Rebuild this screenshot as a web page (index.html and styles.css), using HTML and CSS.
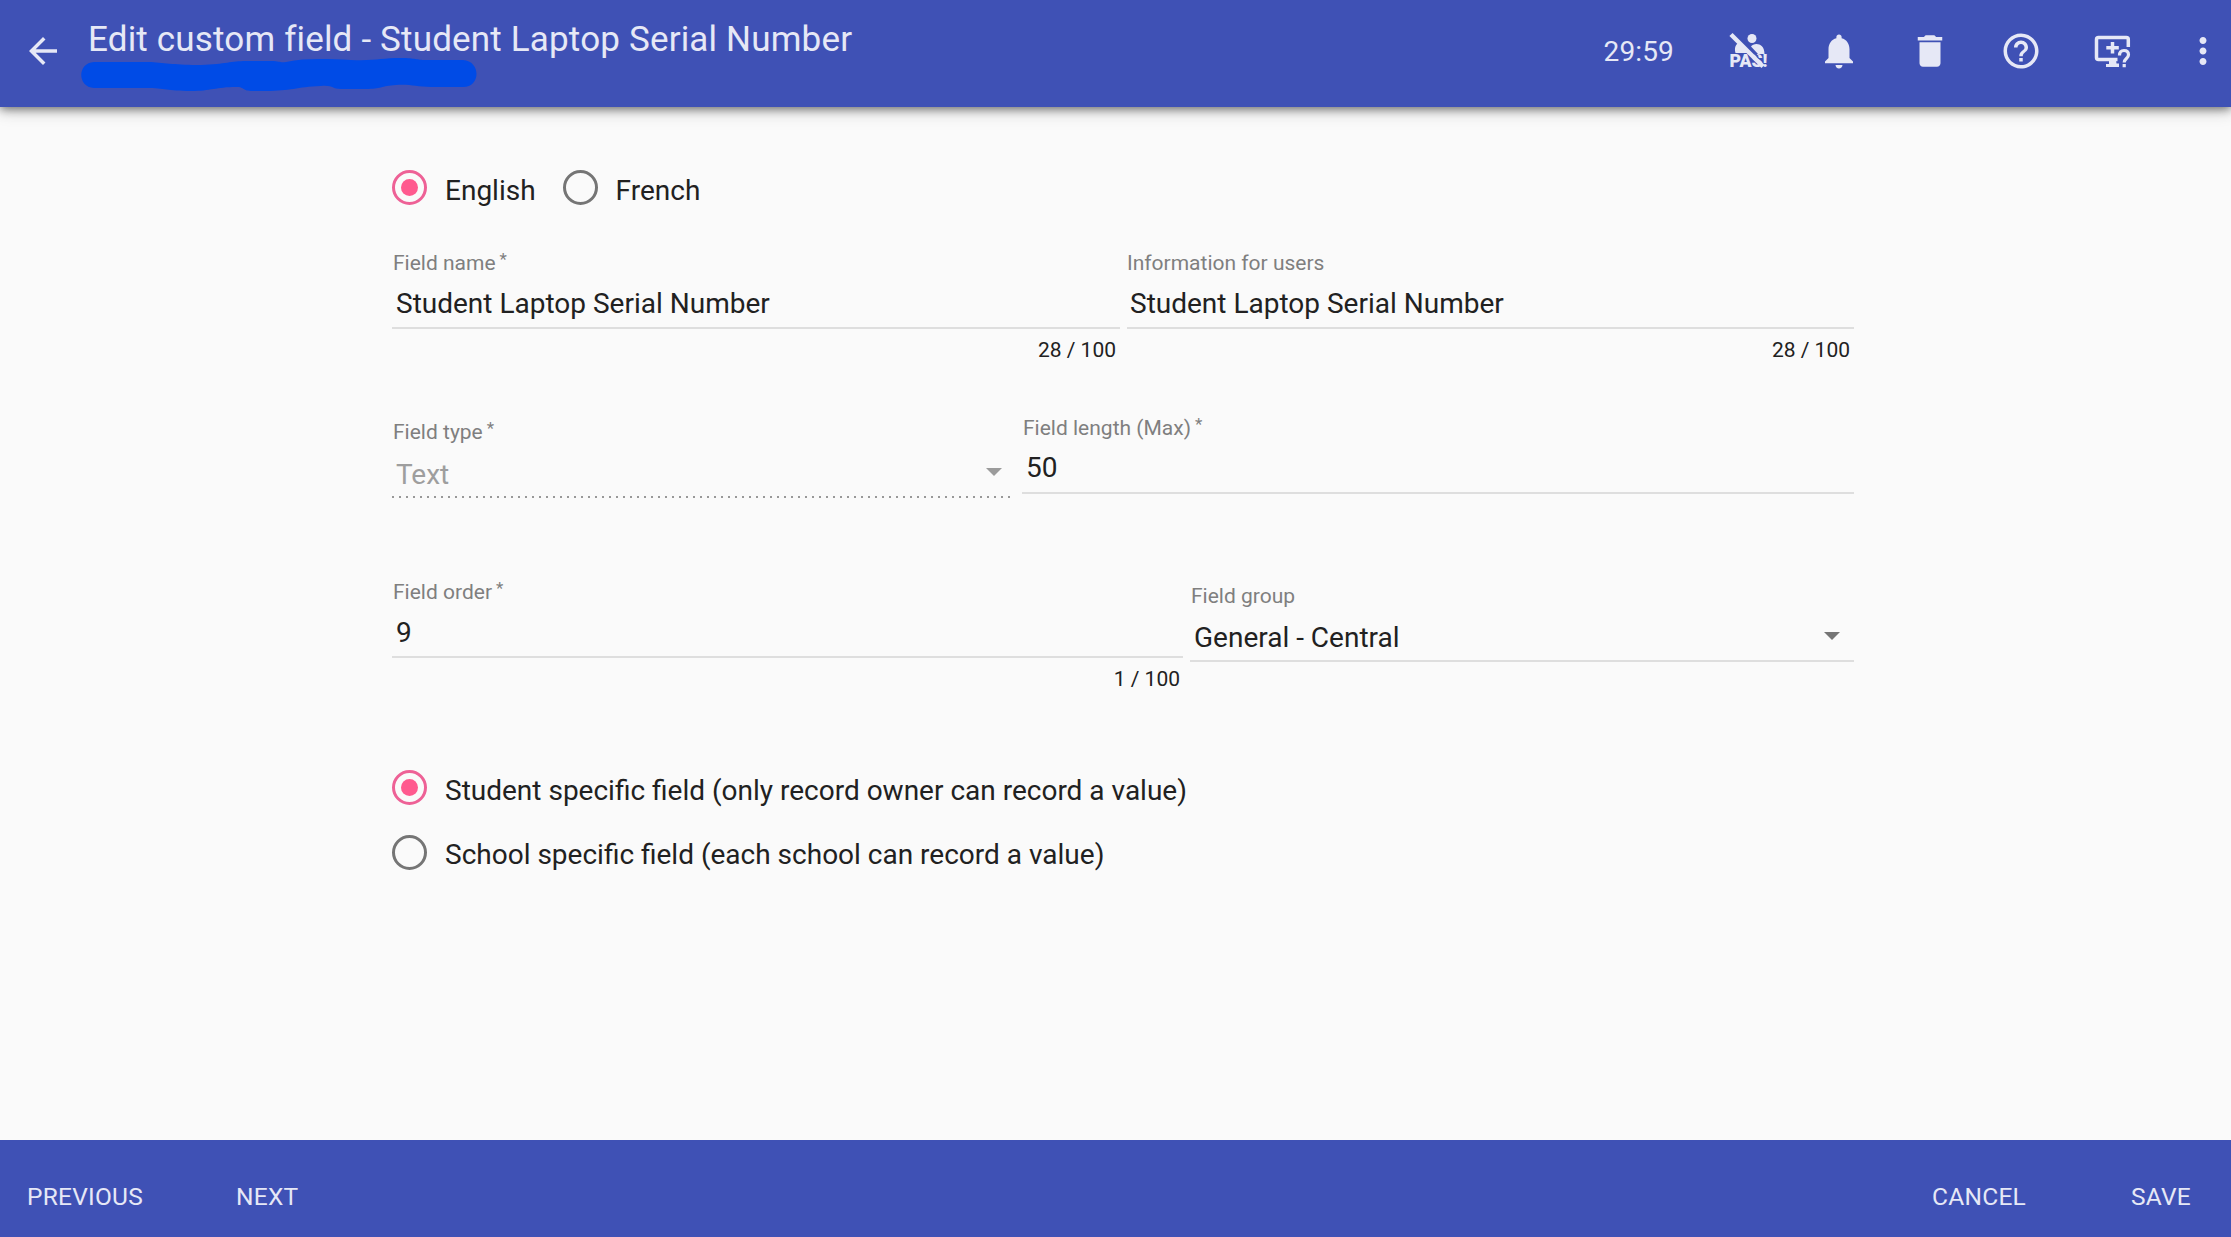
FILE: index.html
```html
<!DOCTYPE html>
<html lang="en">
<head>
<meta charset="utf-8">
<title>Edit custom field</title>
<link rel="stylesheet" href="styles.css">
</head>
<body>
<header class="toolbar">
  <svg class="icon" viewBox="0 0 24 24"><path d="M20 11H7.83l5.59-5.59L12 4l-8 8 8 8 1.41-1.41L7.83 13H20v-2z"/></svg>
  <div class="heading">
    <h1 class="title">Edit custom field - Student Laptop Serial Number</h1>
    <svg class="marker" viewBox="0 0 396 34"><path d="M13 4H70C85 5 95 7 120 7C145 6 150 3 165 3H190C200 3 198 5 205 4C225 0 245 1 270 2C295 3 300 0 320 0C335 0 335 2 345 2H382C400 3 400 29 382 29H350C335 29 330 26 315 27C300 28 300 31 285 31H260C250 31 253 27 240 28C215 29 210 33 185 33H172C160 33 165 29 155 29C135 29 130 33 110 33C85 33 85 30 65 30H13C-4 29-4 5 13 4Z"/></svg>
  </div>
  <div class="tools">
    <span class="timer">29:59</span>
    <svg class="icon" viewBox="0 0 42 42">
      <circle cx="25" cy="8.500" r="4.500"/>
      <path d="M24 16.500C26.500 12.500 37.500 12 37.500 24H31ZM8.500 23C7 18 8.500 13.500 13 12.500L23 23Z"/>
      <text class="pas" x="2.500" y="37" textLength="38" lengthAdjust="spacingAndGlyphs">PAS!</text>
      <path class="gap" d="M7.800 3.500L31 26.700"/>
      <path class="slash" d="M4 4.500L36 36.500"/>
    </svg>
    <svg class="icon" viewBox="0 0 24 24"><path d="M12 22c1.100 0 2-.9 2-2h-4c0 1.100.89 2 2 2zm6-6v-5c0-3.070-1.640-5.640-4.500-6.320V4c0-.83-.67-1.500-1.500-1.500s-1.500.67-1.500 1.500v.68C7.630 5.360 6 7.920 6 11v5l-2 2v1h16v-1l-2-2z"/></svg>
    <svg class="icon" viewBox="0 0 24 24"><path d="M6 19c0 1.100.9 2 2 2h8c1.100 0 2-.9 2-2V7H6v12zM19 4h-3.500l-1-1h-5l-1 1H5v2h14V4z"/></svg>
    <svg class="icon" viewBox="0 0 24 24"><path d="M11 18h2v-2h-2v2zm1-16C6.480 2 2 6.480 2 12s4.480 10 10 10 10-4.480 10-10S17.520 2 12 2zm0 18c-4.410 0-8-3.590-8-8s3.590-8 8-8 8 3.590 8 8-3.590 8-8 8zm0-14c-2.210 0-4 1.790-4 4h2c0-1.100.9-2 2-2s2 .9 2 2c0 2-3 1.750-3 5h2c0-2.250 3-2.500 3-5 0-2.210-1.790-4-4-4z"/></svg>
    <svg class="icon" viewBox="0 0 42 42">
      <path class="line" d="M37.300 17V9.500Q37.300 7.500 35.300 7.500H7.500Q5.500 7.500 5.500 9.500V27.500Q5.500 29.500 7.500 29.500H26.500M21.500 12V23.500M15.300 17.800H27.800"/>
      <path d="M18 30H25L25.500 33.500H28V37H15V34H18Z"/>
      <path class="mark" d="M28.500 25.500Q28.500 20.500 33 20.500Q37.500 20.500 37.500 24.800C37.500 28.500 33.200 28.500 33.200 32.500M33.200 34V37.200"/>
    </svg>
    <svg class="icon" viewBox="0 0 24 24"><path d="M12 8c1.100 0 2-.9 2-2s-.9-2-2-2-2 .9-2 2 .9 2 2 2zm0 2c-1.100 0-2 .9-2 2s.9 2 2 2 2-.9 2-2-.9-2-2-2zm0 6c-1.100 0-2 .9-2 2s.9 2 2 2 2-.9 2-2-.9-2-2-2z"/></svg>
  </div>
</header>

<main class="form">
  <div class="languages">
    <div class="choice"><span class="radio selected"></span><span class="choice-text">English</span></div>
    <div class="choice"><span class="radio"></span><span class="choice-text">French</span></div>
  </div>

  <div class="row names">
    <div class="field">
      <label class="label">Field name<span class="star">*</span></label>
      <div class="value">Student Laptop Serial Number</div>
      <div class="counter">28 / 100</div>
    </div>
    <div class="field info">
      <label class="label">Information for users</label>
      <div class="value">Student Laptop Serial Number</div>
      <div class="counter">28 / 100</div>
    </div>
  </div>

  <div class="row types">
    <div class="field select disabled">
      <label class="label">Field type<span class="star">*</span></label>
      <div class="value">Text<span class="caret"></span></div>
      <div class="dots"></div>
    </div>
    <div class="field">
      <label class="label">Field length (Max)<span class="star">*</span></label>
      <div class="value length">50</div>
    </div>
  </div>

  <div class="row orders">
    <div class="field">
      <label class="label">Field order<span class="star">*</span></label>
      <div class="value">9</div>
      <div class="counter">1 / 100</div>
    </div>
    <div class="field select">
      <label class="label">Field group</label>
      <div class="value">General - Central<span class="caret"></span></div>
    </div>
  </div>

  <div class="scopes">
    <div class="choice"><span class="radio selected"></span><span class="choice-text">Student specific field (only record owner can record a value)</span></div>
    <div class="choice"><span class="radio"></span><span class="choice-text">School specific field (each school can record a value)</span></div>
  </div>
</main>

<footer class="actions">
  <span class="action">Previous</span>
  <span class="action next">Next</span>
  <span class="action cancel">Cancel</span>
  <span class="action">Save</span>
</footer>
</body>
</html>
```

FILE: styles.css
```css
* { box-sizing: border-box; }

body {
  margin: 0;
  height: 1237px;
  display: flex;
  flex-direction: column;
  overflow: hidden;
  background: #fafafa;
  color: #212121;
  font: 28px/1.2 Roboto, sans-serif;
}

.toolbar {
  height: 107px;
  flex: none;
  display: flex;
  padding-left: 22px;
  background: #3f51b5;
  color: #e6e8f6;
  box-shadow: 0 2px 9px rgba(0, 0, 0, .5), 0 4px 16px rgba(0, 0, 0, .16);
}

.icon {
  width: 42px;
  height: 42px;
  flex: none;
  fill: #e6e8f6;
}

.toolbar > .icon { margin-top: 30px; }

.heading {
  display: flex;
  flex-direction: column;
  padding: 20px 0 0 17px;
}

.title {
  margin: 0 0 -1px 7px;
  font-size: 35px;
  font-weight: 400;
  line-height: 39px;
  letter-spacing: .005em;
  white-space: nowrap;
}

.marker {
  width: 396px;
  height: 34px;
  fill: #004be6;
}

.tools {
  display: flex;
  align-items: center;
  height: 42px;
  margin: 30px 7px 0 auto;
  gap: 49px;
}

.timer { margin-right: 4px; padding-top: 1px; letter-spacing: .005em; }

.pas { font: 900 17.5px Roboto, sans-serif; }
.gap { stroke: #3f51b5; stroke-width: 2; fill: none; }
.slash { stroke: #e6e8f6; stroke-width: 4.5; fill: none; }
.line { stroke: #e6e8f6; stroke-width: 3.5px; fill: none; }
.mark { stroke: #e6e8f6; stroke-width: 3.2px; fill: none; }

.form {
  flex: 1;
  width: 1461px;
  margin-left: 392px;
  padding-top: 63px;
}

.languages { display: flex; height: 79px; gap: 27px; }

.choice { display: flex; height: 35px; gap: 18px; }
.choice-text { line-height: 41px; white-space: nowrap; }

.radio {
  width: 35px;
  height: 35px;
  flex: none;
  display: grid;
  place-items: center;
  border: 3px solid #757575;
  border-radius: 50%;
}

.radio.selected { border-color: #ee6196; }

.radio.selected::after {
  content: "";
  width: 17px;
  height: 17px;
  border-radius: 50%;
  background: #ff5a8f;
}

.row { display: grid; align-items: start; }
.names { height: 165px; grid-template-columns: 728px 727px; gap: 7px; }
.types { height: 164px; grid-template-columns: 618px 832px; gap: 12px; }
.orders { height: 192px; grid-template-columns: 791px 664px; gap: 7px; }

.field { display: flex; flex-direction: column; }

.label {
  height: 28px;
  padding-left: 1px;
  color: #7f7f7f;
  font-size: 21px;
  line-height: 28px;
}

.star {
  margin-left: 4px;
  font-size: 17px;
  line-height: 1;
  vertical-align: 5px;
}

.value {
  height: 49px;
  margin-top: 3px;
  padding-left: 4px;
  display: flex;
  align-items: center;
  justify-content: space-between;
  border-bottom: 2px solid #dedede;
}

.value.length { padding-bottom: 1px; }
.info .label { padding-left: 0; }
.info .value { padding-left: 3px; }

.counter {
  margin-top: 9px;
  padding-right: 4px;
  font-size: 21px;
  line-height: 24px;
  text-align: right;
}

.orders .counter { padding-right: 3px; }

.select { margin-top: 4px; }
.select .value { height: 46px; margin-top: 6px; padding-right: 14px; }

.caret {
  margin-top: -4px;
  border: 8px solid transparent;
  border-top-color: #757575;
  border-bottom: 0;
}

.select.disabled .value {
  height: 44px;
  padding: 1px 8px 0 4px;
  border: 0;
  color: #9e9e9e;
}

.disabled .caret { margin-top: -6px; border-top-color: #9b9b9b; }

.dots {
  height: 2px;
  background: repeating-linear-gradient(90deg, #989898 0 2px, transparent 2px 7px);
}

.scopes { display: flex; flex-direction: column; gap: 30px; }
.scopes .choice:last-child .choice-text { line-height: 40px; }

.actions {
  height: 97px;
  flex: none;
  display: flex;
  align-items: center;
  padding: 16px 40px 0 27px;
  background: #3f51b5;
  color: #e6e8f6;
  font-size: 24.5px;
  letter-spacing: .01em;
  text-transform: uppercase;
}

.next { margin-left: 93px; }
.cancel { margin: 0 105px 0 auto; }
```
